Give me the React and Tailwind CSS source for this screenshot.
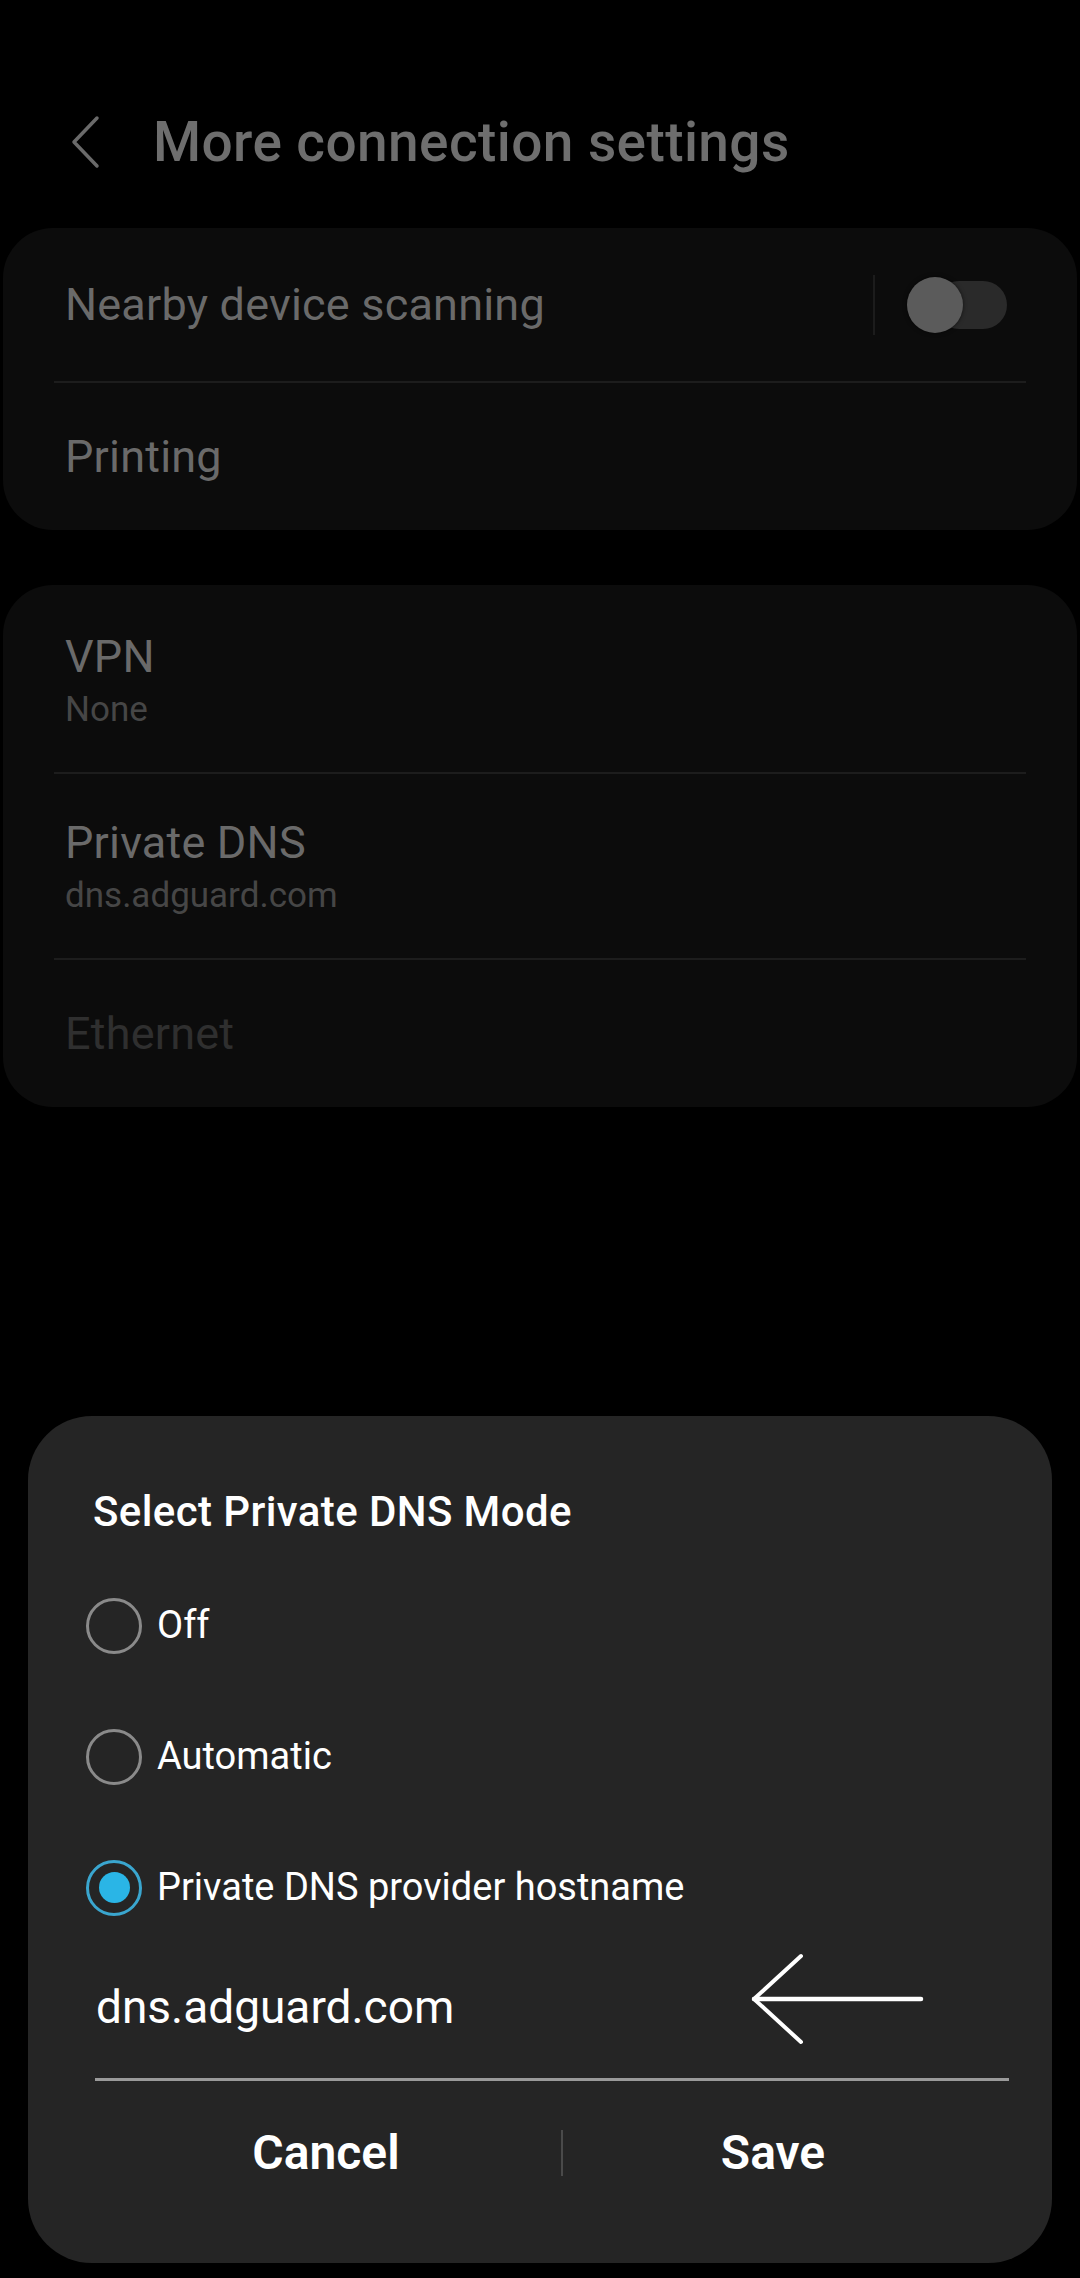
import React from "react";

const font = { fontFamily: "Roboto, 'Noto Sans', sans-serif" };

const Radio = ({ checked }) =>
  checked ? (
    <div className="w-[56px] h-[56px] rounded-full border-[3px] border-[#3aa6cf] flex items-center justify-center shrink-0">
      <div className="w-[31px] h-[31px] rounded-full bg-[#2ab5e6]" />
    </div>
  ) : (
    <div className="w-[56px] h-[56px] rounded-full border-[3px] border-[#8a8a8a] shrink-0" />
  );

const Toggle = () => (
  <div className="relative w-[100px] h-[56px]">
    <div className="absolute right-0 top-[4px] w-[72px] h-[48px] rounded-full bg-[#2a2a2a]" />
    <div className="absolute left-0 top-0 w-[56px] h-[56px] rounded-full bg-[#5b5b5b] shadow-[0_0_4px_rgba(0,0,0,0.6)]" />
  </div>
);

export default function App() {
  const options = [
    { label: "Off", checked: false },
    { label: "Automatic", checked: false },
    { label: "Private DNS provider hostname", checked: true },
  ];

  return (
    <div className="w-[1080px] h-[2278px] bg-black flex flex-col pb-[15px]" style={font}>
      {/* Header */}
      <div className="flex items-center h-[60px] mt-[112px] mb-[56px] pl-[70px]">
        <svg width="30" height="54" viewBox="0 0 30 54" fill="none">
          <path d="M27 3 L4 27 L27 51" stroke="#6a6a6a" strokeWidth="3.5" strokeLinecap="round" strokeLinejoin="round" />
        </svg>
        <span className="ml-[53px] text-[55px] leading-[60px] font-medium text-[#6e6e6e] tracking-[0.4px]">
          More connection settings
        </span>
      </div>

      {/* Card 1 */}
      <div className="mx-[3px] rounded-[50px] bg-[#0c0c0c]">
        <div className="h-[153px] flex items-center pl-[62px] pr-[70px]">
          <span className="text-[45px] tracking-[0.2px] text-[#6a6a6a] flex-1">Nearby device scanning</span>
          <div className="w-[2px] h-[60px] bg-[#1c1c1c] mr-[32px]" />
          <Toggle />
        </div>
        <div className="mx-[51px] h-[2px] bg-[#1d1d1d]" />
        <div className="h-[147px] flex items-center pl-[62px]">
          <span className="text-[45px] tracking-[0.2px] text-[#6a6a6a]">Printing</span>
        </div>
      </div>

      {/* Card 2 */}
      <div className="mx-[3px] mt-[55px] rounded-[50px] bg-[#0c0c0c]">
        <div className="h-[187px] pl-[62px] pt-[46px]">
          <div className="text-[45px] leading-[52px] tracking-[0.2px] text-[#6a6a6a]">VPN</div>
          <div className="text-[35px] leading-[54px] text-[#464646]">None</div>
        </div>
        <div className="mx-[51px] h-[2px] bg-[#1d1d1d]" />
        <div className="h-[184px] pl-[62px] pt-[43px]">
          <div className="text-[45px] leading-[52px] tracking-[0.2px] text-[#6a6a6a]">Private DNS</div>
          <div className="text-[35px] leading-[54px] text-[#464646]">dns.adguard.com</div>
        </div>
        <div className="mx-[51px] h-[2px] bg-[#1d1d1d]" />
        <div className="h-[147px] flex items-center pl-[62px]">
          <span className="text-[45px] tracking-[0.2px] text-[#2f2f2f]">Ethernet</span>
        </div>
      </div>

      {/* Dialog */}
      <div className="mt-auto mx-[28px] h-[847px] rounded-[64px] bg-[#252525] pt-[72px]">
        <div className="pl-[65px] text-[42px] leading-[48px] tracking-[0.4px] font-medium text-white">
          Select Private DNS Mode
        </div>
        <div className="mt-[24px]">
          {options.map((o) => (
            <div key={o.label} className="h-[131px] flex items-center pl-[58px]">
              <Radio checked={o.checked} />
              <span className="ml-[15px] text-[38px] text-white">{o.label}</span>
            </div>
          ))}
        </div>
        <div className="ml-[67px] mr-[43px] pt-[28px] pb-[45px] border-b-[3px] border-[#9a9a9a]">
          <div className="flex items-center h-[52px]">
            <span className="pl-[1px] text-[46px] leading-[52px] text-white">dns.adguard.com</span>
            <svg className="ml-auto mr-[84px] -mt-[14px]" width="174" height="94" viewBox="0 0 174 94" fill="none">
              <path d="M3 46 H170" stroke="white" strokeWidth="4.5" strokeLinecap="round" />
              <path d="M50 3 L3 46 L50 89" stroke="white" strokeWidth="4" strokeLinecap="round" strokeLinejoin="round" />
            </svg>
          </div>
        </div>
        <div className="h-[144px] flex items-center pl-[63px]">
          <div className="w-[470px] text-center text-[48px] font-semibold text-white">Cancel</div>
          <div className="w-[2px] h-[46px] bg-[#4a4a4a]" />
          <div className="w-[420px] text-center text-[48px] font-semibold text-white">Save</div>
        </div>
      </div>
    </div>
  );
}
